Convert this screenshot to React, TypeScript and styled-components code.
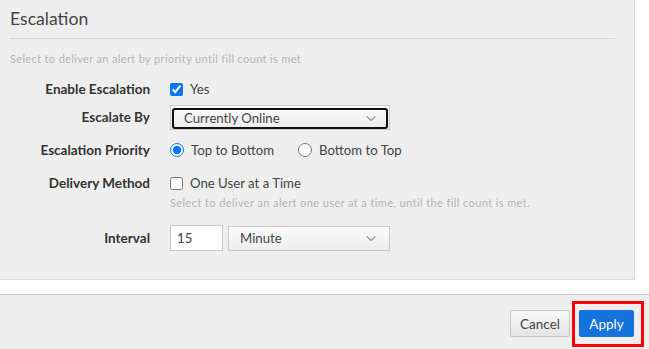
import React from "react";
import styled, { createGlobalStyle, css } from "styled-components";

const Global = createGlobalStyle`
  html, body { margin: 0; padding: 0; background: #ffffff; }
  body { font-family: "Lato", "Noto Sans", "Liberation Sans", sans-serif; color: #333; }
  * { box-sizing: border-box; }
`;

const Page = styled.div`
  width: 649px;
  height: 349px;
  display: flex;
  flex-direction: column;
  overflow: hidden;
`;

const Panel = styled.section`
  width: 635px;
  height: 280px;
  background: #eeeeee;
  border-right: 1px solid #dcdcdc;
  border-bottom: 1px solid #dcdcdc;
  padding: 0 19px 0 10px;
  display: flex;
  flex-direction: column;
`;

const Title = styled.h2`
  margin: 0;
  height: 39px;
  line-height: 38px;
  font-size: 17.6px;
  font-weight: 400;
  color: #444;
  border-bottom: 1px solid #d6d6d6;
`;

const Desc = styled.p`
  margin: 13px 0 0;
  font-size: 11px;
  letter-spacing: 0.35px;
  line-height: 14px;
  color: #b4b4b4;
`;

const Form = styled.div`
  display: flex;
  flex-direction: column;
`;

const Row = styled.div<{ $mt: number }>`
  display: grid;
  grid-template-columns: 140px 1fr;
  column-gap: 20px;
  align-items: start;
  margin-top: ${(p) => p.$mt}px;
`;

const Label = styled.label<{ $h: number }>`
  text-align: right;
  font-weight: 700;
  font-size: 13.5px;
  line-height: ${(p) => p.$h}px;
  color: #333;
`;

const Controls = styled.div`
  display: flex;
  flex-direction: column;
`;

const Inline = styled.div<{ $gap?: number; $h?: number }>`
  display: flex;
  align-items: center;
  height: ${(p) => p.$h ?? 22}px;
  gap: ${(p) => p.$gap ?? 0}px;
`;

const Choice = styled.label`
  display: inline-flex;
  align-items: center;
  gap: 7px;
  font-size: 13.2px;
  color: #444;
`;

const Box = styled.input`
  margin: 0;
  width: 13px;
  height: 13px;
`;

const Radio = styled.input`
  margin: 0;
  width: 14px;
  height: 14px;
`;

const Help = styled.div`
  font-size: 11px;
  letter-spacing: 0.4px;
  line-height: 14px;
  color: #b4b4b4;
  margin-top: 2px;
`;

const SelectFrame = styled.div<{ $w: number; $focused?: boolean }>`
  position: relative;
  width: ${(p) => p.$w}px;
  height: 25px;
  border: 1px solid #c8c8c8;
  background: linear-gradient(#fbfbfb, #ededed);
  ${(p) =>
    p.$focused &&
    css`
      padding: 1px;
    `}
`;

const SelectInner = styled.select<{ $focused?: boolean }>`
  appearance: none;
  -webkit-appearance: none;
  width: 100%;
  height: 100%;
  margin: 0;
  background: transparent;
  font-family: inherit;
  font-size: 13.2px;
  color: #444;
  outline: none;
  ${(p) =>
    p.$focused
      ? css`
          border: 2px solid #111;
          border-radius: 3px;
          padding: 0 0 0 10px;
        `
      : css`
          border: none;
          padding: 0 0 0 11px;
        `}
`;

const Chevron = styled.svg`
  position: absolute;
  right: 13px;
  top: 50%;
  width: 10px;
  height: 5px;
  margin-top: -2px;
  pointer-events: none;
`;

const TextInput = styled.input`
  width: 53px;
  height: 26px;
  margin: 0 5px 0 0;
  border: 1px solid #c8c8c8;
  background: #fff;
  font-family: inherit;
  font-size: 13.2px;
  color: #444;
  padding: 0 0 0 6px;
  outline: none;
`;

const Gap = styled.div`
  flex: 0 0 14px;
`;

const Footer = styled.footer`
  flex: 1;
  background: #eeeeee;
  border-top: 1px solid #cfcfcf;
  display: flex;
  justify-content: flex-end;
  align-items: flex-start;
  gap: 9px;
  padding: 15px 15px 0 0;
`;

const Button = styled.button<{ $primary?: boolean }>`
  height: 27px;
  font-family: inherit;
  font-size: 13.5px;
  border-radius: 2px;
  cursor: pointer;
  padding: 0;
  ${(p) =>
    p.$primary
      ? css`
          width: 55px;
          background: #1473dd;
          color: #fff;
          border: none;
        `
      : css`
          width: 60px;
          background: linear-gradient(#fafafa, #e4e4e4);
          color: #444;
          border: 1px solid #c6c6c6;
        `}
`;

const Highlight = styled.div`
  position: relative;
  &::after {
    content: "";
    position: absolute;
    left: -7px;
    right: -10px;
    top: -9px;
    bottom: -10px;
    border: 3px solid #f00;
    pointer-events: none;
  }
`;

const ChevronIcon = () => (
  <Chevron viewBox="0 0 10 5">
    <path d="M0.5 0.3 L5 4.5 L9.5 0.3" fill="none" stroke="#444" strokeWidth="0.9" />
  </Chevron>
);

export default function App() {
  return (
    <Page>
      <Global />
      <Panel>
        <Title>Escalation</Title>
        <Desc>Select to deliver an alert by priority until fill count is met</Desc>
        <Form>
          <Row $mt={12}>
            <Label $h={22}>Enable Escalation</Label>
            <Inline>
              <Choice>
                <Box type="checkbox" defaultChecked />
                Yes
              </Choice>
            </Inline>
          </Row>
          <Row $mt={5}>
            <Label $h={25}>Escalate By</Label>
            <SelectFrame $w={220} $focused>
              <SelectInner $focused defaultValue="online">
                <option value="online">Currently Online</option>
                <option value="all">All Users</option>
              </SelectInner>
              <ChevronIcon />
            </SelectFrame>
          </Row>
          <Row $mt={9}>
            <Label $h={22}>Escalation Priority</Label>
            <Inline $gap={24}>
              <Choice>
                <Radio type="radio" name="prio" defaultChecked />
                Top to Bottom
              </Choice>
              <Choice>
                <Radio type="radio" name="prio" />
                Bottom to Top
              </Choice>
            </Inline>
          </Row>
          <Row $mt={11}>
            <Label $h={22}>Delivery Method</Label>
            <Controls>
              <Inline>
                <Choice>
                  <Box type="checkbox" />
                  One User at a Time
                </Choice>
              </Inline>
              <Help>Select to deliver an alert one user at a time, until the fill count is met.</Help>
            </Controls>
          </Row>
          <Row $mt={15}>
            <Label $h={26}>Interval</Label>
            <Inline $h={26}>
              <TextInput defaultValue="15" />
              <SelectFrame $w={162}>
                <SelectInner defaultValue="minute">
                  <option value="minute">Minute</option>
                  <option value="hour">Hour</option>
                </SelectInner>
                <ChevronIcon />
              </SelectFrame>
            </Inline>
          </Row>
        </Form>
      </Panel>
      <Gap />
      <Footer>
        <Button>Cancel</Button>
        <Highlight>
          <Button $primary>Apply</Button>
        </Highlight>
      </Footer>
    </Page>
  );
}
